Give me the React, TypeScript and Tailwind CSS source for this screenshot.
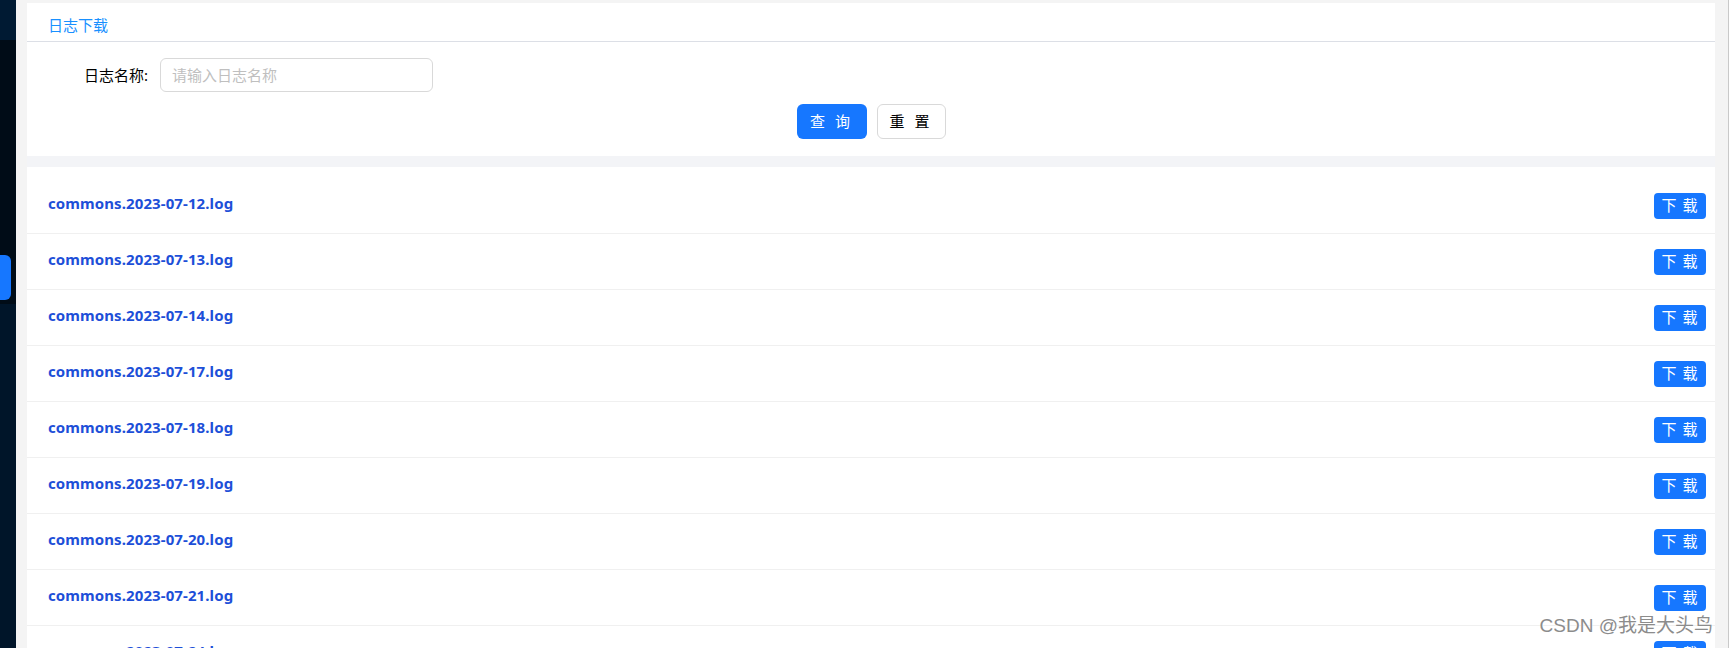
import React from 'react';

const logFiles = [
  'commons.2023-07-12.log',
  'commons.2023-07-13.log',
  'commons.2023-07-14.log',
  'commons.2023-07-17.log',
  'commons.2023-07-18.log',
  'commons.2023-07-19.log',
  'commons.2023-07-20.log',
  'commons.2023-07-21.log',
  'commons.2023-07-24.log',
];

const font = { fontFamily: '"Noto Sans", "Noto Sans CJK SC", sans-serif' };

const App: React.FC = () => {
  return (
    <div
      className="relative flex h-[648px] w-full overflow-hidden bg-[#f4f4f4] border-r border-[#c9c9c9]"
      style={font}
    >
      {/* sidebar strip */}
      <div className="flex w-[16px] shrink-0 flex-col bg-[#000c17]">
        <div className="h-[40px] bg-[#001a33]" />
        <div className="h-[215px]" />
        <div className="h-[45px] w-[11px] rounded-r-[6px] bg-[#1677ff]" />
        <div className="h-[4px]" />
        <div className="flex-1 bg-[#001529]" />
      </div>

      <div className="flex flex-1 flex-col pl-[11px] pr-[13px] pt-[3px]">
        {/* search panel */}
        <div className="h-[153px] shrink-0 bg-white">
          <div className="flex h-[39px] items-start border-b border-[#dcdfe6] pl-[21px] pt-[11px] text-[15px] leading-[22px] text-[#1890ff]">
            日志下载
          </div>
          <div className="flex items-center pt-[16px]">
            <label className="w-[121px] shrink-0 text-right text-[15px] text-black">日志名称:</label>
            <div className="ml-[12px] flex h-[34px] w-[273px] items-center rounded-[6px] border border-[#d9d9d9] px-[11px] text-[15px] text-[#bfbfbf]">
              请输入日志名称
            </div>
          </div>
          <div className="mt-[12px] flex justify-center gap-[10px]">
            <button className="h-[35px] w-[70px] rounded-[6px] bg-[#1677ff] text-[15px] tracking-[3px] text-white">
              查 询
            </button>
            <button className="h-[35px] w-[69px] rounded-[6px] border border-[#d9d9d9] bg-white text-[15px] tracking-[3px] text-black">
              重 置
            </button>
          </div>
        </div>

        <div className="h-[11px] shrink-0 bg-[#f3f4f7]" />

        {/* log list */}
        <div className="flex-1 bg-white pt-[11px]">
          {logFiles.map((name) => (
            <div
              key={name}
              className="flex h-[56px] items-center justify-between border-b border-[#f0f0f0] pl-[21px] pr-[9px]"
            >
              <span className="pb-[4px] text-[15px] font-bold tracking-[0.1px] text-[#1d4fd8]">{name}</span>
              <button className="h-[26px] w-[52px] rounded-[4px] bg-[#1677ff] text-[15px] tracking-[1px] text-white">
                下 载
              </button>
            </div>
          ))}
        </div>
      </div>

      {/* watermark */}
      <div
        className="absolute bottom-[8px] right-[15px] text-[19px] text-[#8c8c8c]"
        style={{ fontFamily: '"Liberation Sans", "Noto Sans CJK SC", sans-serif', textShadow: '0 0 2px #fff, 0 0 1px #fff' }}
      >
        CSDN @我是大头鸟
      </div>
    </div>
  );
};

export default App;
